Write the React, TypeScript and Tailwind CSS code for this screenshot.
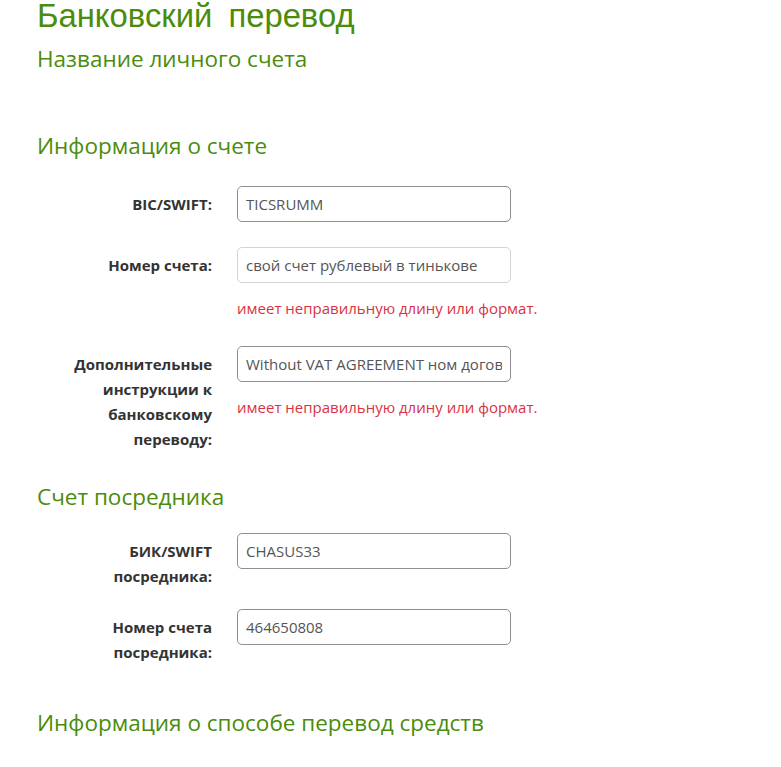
import React from "react";

type Field = {
  label: string;
  value: string;
  error?: string;
  strong?: boolean;
};

const accountFields: Field[] = [
  { label: "BIC/SWIFT:", value: "TICSRUMM", strong: true },
  {
    label: "Номер счета:",
    value: "свой счет рублевый в тинькове",
    error: "имеет неправильную длину или формат.",
  },
  {
    label: "Дополнительные инструкции к банковскому переводу:",
    value: "Without VAT AGREEMENT ном договора",
    error: "имеет неправильную длину или формат.",
    strong: true,
  },
];

const intermediaryFields: Field[] = [
  { label: "БИК/SWIFT посредника:", value: "CHASUS33", strong: true },
  { label: "Номер счета посредника:", value: "464650808", strong: true },
];

function FormRow({ label, value, error, strong }: Field) {
  return (
    <div className="mb-[20px] flex items-start gap-[25px]">
      <label className="w-[170px] shrink-0 pt-[6px] text-right text-[15px] font-bold leading-[25px] text-[#333333]">
        {label}
      </label>
      <div className="pb-[5px]">
        <input
          readOnly
          value={value}
          className={`block h-[36px] w-[274px] rounded-[5px] border bg-white px-[8px] text-[15px] text-[#555555] outline-none ${
            strong ? "border-[#8f8f8f]" : "border-[#d4d4d4]"
          }`}
        />
        {error && (
          <div className="mt-[13px] text-[15px] leading-[25px] text-[#d9333f]">
            {error}
          </div>
        )}
      </div>
    </div>
  );
}

function SectionTitle({ children, className }: { children: React.ReactNode; className?: string }) {
  return (
    <h3 className={`-ml-[5px] text-[22.5px] leading-[30px] text-[#4b8c0b] ${className ?? ""}`}>
      {children}
    </h3>
  );
}

export default function App() {
  return (
    <div
      className="flex min-h-[767px] flex-col overflow-hidden bg-white pl-[42px]"
      style={{ fontFamily: '"Open Sans", "Noto Sans", sans-serif' }}
    >
      <h1
        className="-ml-[5px] text-[32.8px] leading-[32px] text-[#4b8c0b] [word-spacing:7px]"
        style={{ fontFamily: '"Liberation Sans", Arial, sans-serif' }}
      >
        Банковский перевод
      </h1>
      <SectionTitle className="mt-[12px]">Название личного счета</SectionTitle>

      <SectionTitle className="mt-[57px] mb-[25px]">Информация о счете</SectionTitle>
      {accountFields.map((f) => (
        <FormRow key={f.label} {...f} />
      ))}

      <SectionTitle className="mt-[10px] mb-[21px]">Счет посредника</SectionTitle>
      {intermediaryFields.map((f) => (
        <FormRow key={f.label} {...f} />
      ))}

      <SectionTitle className="mt-[23px] mb-[17px]">
        Информация о способе перевод средств
      </SectionTitle>
      <div className="flex items-start gap-[25px]">
        <div className="w-[170px] shrink-0 pt-[5px] pl-[71px] text-[15px] font-bold leading-[25px] text-[#333333]">
          Комиссия:
        </div>
        <div className="pl-[144px] pt-[5px] text-[15px] leading-[25px] text-[#555555]">
          10.00 USD
        </div>
      </div>
    </div>
  );
}
